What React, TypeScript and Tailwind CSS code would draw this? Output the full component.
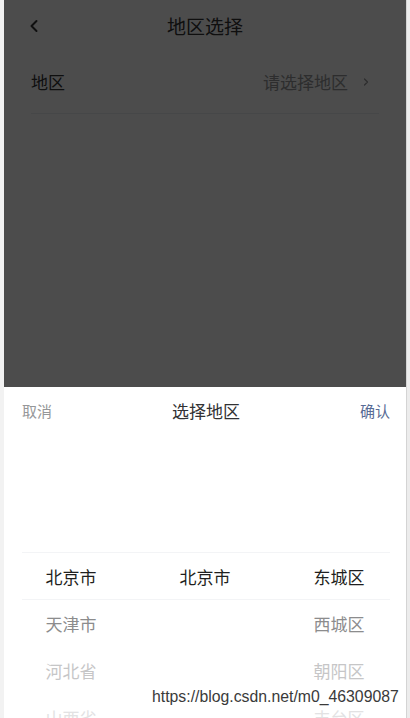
import { ChevronLeft, ChevronRight } from "lucide-react";

const cjk = { fontFamily: '"Noto Sans CJK SC", "Noto Sans", sans-serif' };

const columns = [
    ["北京市", "天津市", "河北省", "山西省"],
    ["北京市"],
    ["东城区", "西城区", "朝阳区", "丰台区"],
];

const shades = ["text-[#1f1f20]", "text-[#8c8c8d]", "text-[#c6c6c7]", "text-[#e2e2e3]"];

const App = () => {
    return (
        <div className="relative flex h-[718px] w-[410px] overflow-hidden bg-[#f2f2f2]" style={cjk}>
            <div className="w-[4px] shrink-0 bg-[#f2f2f2]" />

            <div className="relative w-[402px] shrink-0 bg-white">
                {/* Page */}
                <header className="grid h-[52px] grid-cols-[60px_1fr_60px] items-center">
                    <span className="pl-[20px] text-[#323233]">
                        <ChevronLeft size={20} strokeWidth={2.4} />
                    </span>
                    <h1 className="text-center text-[19px] text-[#323233]">地区选择</h1>
                    <span />
                </header>

                <div className="mx-[27px] flex h-[62px] items-center justify-between border-b border-[#ebedf0] pb-[2px]">
                    <span className="text-[17px] text-[#323233]">地区</span>
                    <div className="flex items-center gap-[12px] pr-[7px] text-[#969799]">
                        <span className="text-[17px]">请选择地区</span>
                        <ChevronRight size={12} strokeWidth={2.5} />
                    </div>
                </div>

                {/* Overlay */}
                <div className="absolute inset-0 bg-black/70" />

                {/* Area popup */}
                <div className="absolute bottom-0 left-0 right-0 flex h-[331px] flex-col bg-white">
                    <div className="flex h-[48px] items-center justify-between pl-[18px] pr-[16px]">
                        <span className="text-[15px] text-[#969799]">取消</span>
                        <span className="text-[17px] text-[#323233]">选择地区</span>
                        <span className="text-[15px] text-[#576b95]">确认</span>
                    </div>

                    <div className="relative h-[283px] overflow-hidden">
                        <div className="grid grid-cols-3 pt-[118px]">
                            {columns.map((col, i) => (
                                <ul key={i}>
                                    {col.map((item, j) => (
                                        <li key={item + j} className={`flex h-[47px] items-center justify-center text-[17px] ${shades[j]}`}>
                                            {item}
                                        </li>
                                    ))}
                                </ul>
                            ))}
                        </div>
                        <div className="absolute left-[18px] right-[16px] top-[117px] h-[48px] border-y border-[#f3f4f6]" />
                    </div>
                </div>
            </div>

            <div className="w-[4px] shrink-0 border-l border-[#d4d4d4] bg-[#ececec]" />

            {/* Watermark */}
            <span className="absolute left-[152px] top-[687px] text-[15.8px] leading-[20px] text-[#3a3a3a]" style={{ fontFamily: '"Liberation Sans", Arial, sans-serif' }}>
                https://blog.csdn.net/m0_46309087
            </span>
        </div>
    )
}

export default App
